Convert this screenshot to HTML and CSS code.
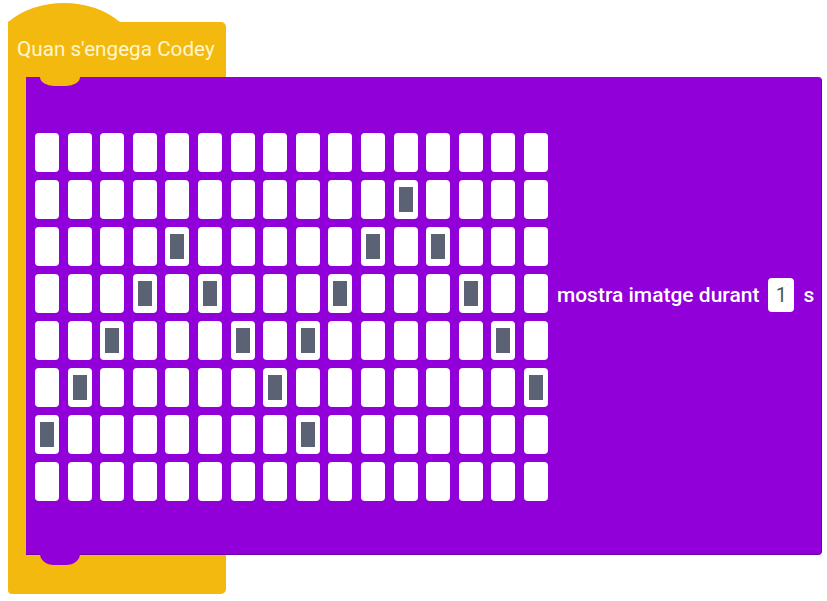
FILE: index.html
```html
<!DOCTYPE html>
<html>
<head>
<meta charset="utf-8">
<link rel="stylesheet" href="styles.css">
</head>
<body>
<div class="script">
  <svg class="cap" width="112" height="20" viewBox="0 0 112 20"><path d="M0 20 C29 -5.5 83 -5.5 112 20 Z" fill="#f3b90e"/></svg>
  <div class="hat">
    <div class="hat-head">Quan s'engega Codey</div>
    <div class="block">
      <div class="matrix">
        <span class="led"></span><span class="led"></span><span class="led"></span><span class="led"></span><span class="led"></span><span class="led"></span><span class="led"></span><span class="led"></span><span class="led"></span><span class="led"></span><span class="led"></span><span class="led"></span><span class="led"></span><span class="led"></span><span class="led"></span><span class="led"></span>
        <span class="led"></span><span class="led"></span><span class="led"></span><span class="led"></span><span class="led"></span><span class="led"></span><span class="led"></span><span class="led"></span><span class="led"></span><span class="led"></span><span class="led"></span><span class="led on"></span><span class="led"></span><span class="led"></span><span class="led"></span><span class="led"></span>
        <span class="led"></span><span class="led"></span><span class="led"></span><span class="led"></span><span class="led on"></span><span class="led"></span><span class="led"></span><span class="led"></span><span class="led"></span><span class="led"></span><span class="led on"></span><span class="led"></span><span class="led on"></span><span class="led"></span><span class="led"></span><span class="led"></span>
        <span class="led"></span><span class="led"></span><span class="led"></span><span class="led on"></span><span class="led"></span><span class="led on"></span><span class="led"></span><span class="led"></span><span class="led"></span><span class="led on"></span><span class="led"></span><span class="led"></span><span class="led"></span><span class="led on"></span><span class="led"></span><span class="led"></span>
        <span class="led"></span><span class="led"></span><span class="led on"></span><span class="led"></span><span class="led"></span><span class="led"></span><span class="led on"></span><span class="led"></span><span class="led on"></span><span class="led"></span><span class="led"></span><span class="led"></span><span class="led"></span><span class="led"></span><span class="led on"></span><span class="led"></span>
        <span class="led"></span><span class="led on"></span><span class="led"></span><span class="led"></span><span class="led"></span><span class="led"></span><span class="led"></span><span class="led on"></span><span class="led"></span><span class="led"></span><span class="led"></span><span class="led"></span><span class="led"></span><span class="led"></span><span class="led"></span><span class="led on"></span>
        <span class="led on"></span><span class="led"></span><span class="led"></span><span class="led"></span><span class="led"></span><span class="led"></span><span class="led"></span><span class="led"></span><span class="led on"></span><span class="led"></span><span class="led"></span><span class="led"></span><span class="led"></span><span class="led"></span><span class="led"></span><span class="led"></span>
        <span class="led"></span><span class="led"></span><span class="led"></span><span class="led"></span><span class="led"></span><span class="led"></span><span class="led"></span><span class="led"></span><span class="led"></span><span class="led"></span><span class="led"></span><span class="led"></span><span class="led"></span><span class="led"></span><span class="led"></span><span class="led"></span>
      </div>
      <div class="label">
        <span class="text">mostra imatge durant</span>
        <span class="input">1</span>
        <span class="text">s</span>
      </div>
    </div>
  </div>
</div>
</body>
</html>
```
FILE: styles.css
```css
html, body {
  margin: 0;
  background: #ffffff;
}

.script {
  padding: 2px 0 0 8px;
  font-family: Roboto, "Liberation Sans", sans-serif;
}

.cap {
  display: block;
}

.hat {
  width: 218px;
  background: #f3b90e;
  border-radius: 0 5px 5px 4px;
  padding-bottom: 39px;
}

.hat-head {
  height: 55px;
  line-height: 55px;
  padding-left: 9px;
  color: #fff6cc;
  font-size: 20.7px;
  white-space: nowrap;
}

.block {
  position: relative;
  margin-left: 18px;
  width: 796px;
  height: 478px;
  box-sizing: border-box;
  background: #9100d8;
  border-right: 1px solid #6f00a8;
  border-bottom: 1px solid #6f00a8;
  border-radius: 0 4px 4px 0;
  display: flex;
  align-items: flex-start;
  padding: 56px 0 0 9px;
}

.block::before {
  content: "";
  position: absolute;
  top: 0;
  left: 14px;
  width: 40px;
  height: 9px;
  background: #f3b90e;
  border-radius: 0 0 14px 14px / 0 0 9px 9px;
}

.block::after {
  content: "";
  position: absolute;
  top: 100%;
  left: 14px;
  width: 40px;
  height: 11px;
  background: #9100d8;
  border-radius: 0 0 14px 14px / 0 0 11px 11px;
}

.matrix {
  display: grid;
  grid-template-columns: repeat(16, 24px);
  grid-auto-rows: 39px;
  column-gap: 8.6px;
  row-gap: 8px;
}

.led {
  background: #ffffff;
  border-radius: 4px;
  display: flex;
  align-items: center;
  justify-content: center;
}

.led.on::before {
  content: "";
  width: 14px;
  height: 25px;
  background: #5a6274;
}

.label {
  display: flex;
  align-items: center;
  gap: 9px;
  margin: 145px 0 0 9px;
  height: 34px;
}

.text {
  color: #ffffff;
  font-size: 21px;
  font-weight: 500;
  white-space: nowrap;
}

.input {
  width: 26px;
  height: 34px;
  line-height: 34px;
  text-align: center;
  background: #ffffff;
  border-radius: 4px;
  color: #4a5a52;
  font-size: 20px;
}
```
